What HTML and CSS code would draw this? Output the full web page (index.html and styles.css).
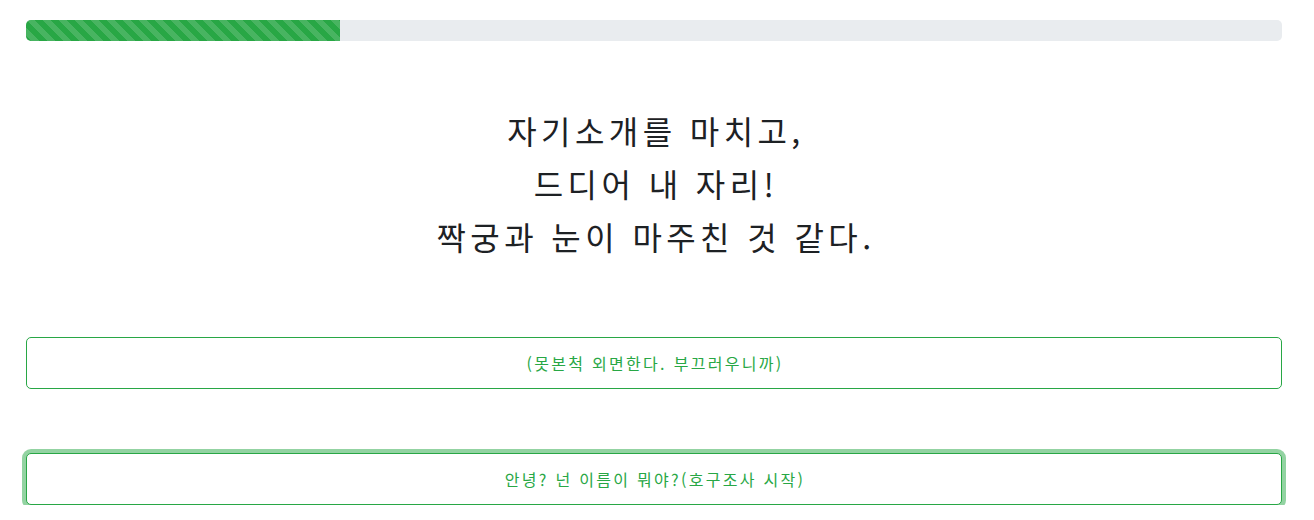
FILE: index.html
```html
<!DOCTYPE html>
<html lang="ko">
<head>
  <meta charset="UTF-8">
  <meta name="viewport" content="width=device-width, initial-scale=1.0">
  <title>자기소개</title>
  <link rel="stylesheet" href="styles.css">
</head>
<body>

<div class="container">

  <div class="progress">
    <div class="progress-bar" style="width: 25%"></div>
  </div>

  <div class="story">
    자기소개를 마치고,<br>
    드디어 내 자리!<br>
    짝궁과 눈이 마주친 것 같다.
  </div>

  <div class="choices">
    <button class="choice">(못본척 외면한다. 부끄러우니까)</button>
    <button class="choice focused">안녕? 넌 이름이 뭐야?(호구조사 시작)</button>
  </div>

</div>

</body>
</html>
```

FILE: styles.css
```css
body {
  margin: 0;
  padding: 0;
  background-color: #fff;
  color: #212529;
  font-family: "Noto Sans CJK KR", "Noto Sans", sans-serif;
}
.container {
  padding: 20px 32px 0 26px;
}
.progress {
  height: 21px;
  background-color: #e9ecef;
  border-radius: 5px;
  overflow: hidden;
  display: flex;
}
.progress-bar {
  height: 100%;
  background-color: #28a745;
  background-image: linear-gradient(45deg, rgba(255, 255, 255, .15) 25%, transparent 25%, transparent 50%, rgba(255, 255, 255, .15) 50%, rgba(255, 255, 255, .15) 75%, transparent 75%, transparent);
  background-size: 16px 16px;
}
.story {
  margin-top: 63px;
  text-align: center;
  font-size: 32px;
  line-height: 53px;
  letter-spacing: 4.4px;
  padding-left: 4px;
  color: #1d2124;
}
.choices {
  margin-top: 74px;
  display: flex;
  flex-direction: column;
  gap: 64px;
}
.choice {
  display: block;
  width: 100%;
  height: 52px;
  background: #fff;
  border: 1px solid #28a745;
  border-radius: 5px;
  color: #28a745;
  font-family: inherit;
  font-size: 16px;
  letter-spacing: 2.3px;
  padding-left: 8px;
  cursor: pointer;
}
.choice.focused {
  box-shadow: 0 0 0 4px rgba(40, 167, 69, .5);
}
```
